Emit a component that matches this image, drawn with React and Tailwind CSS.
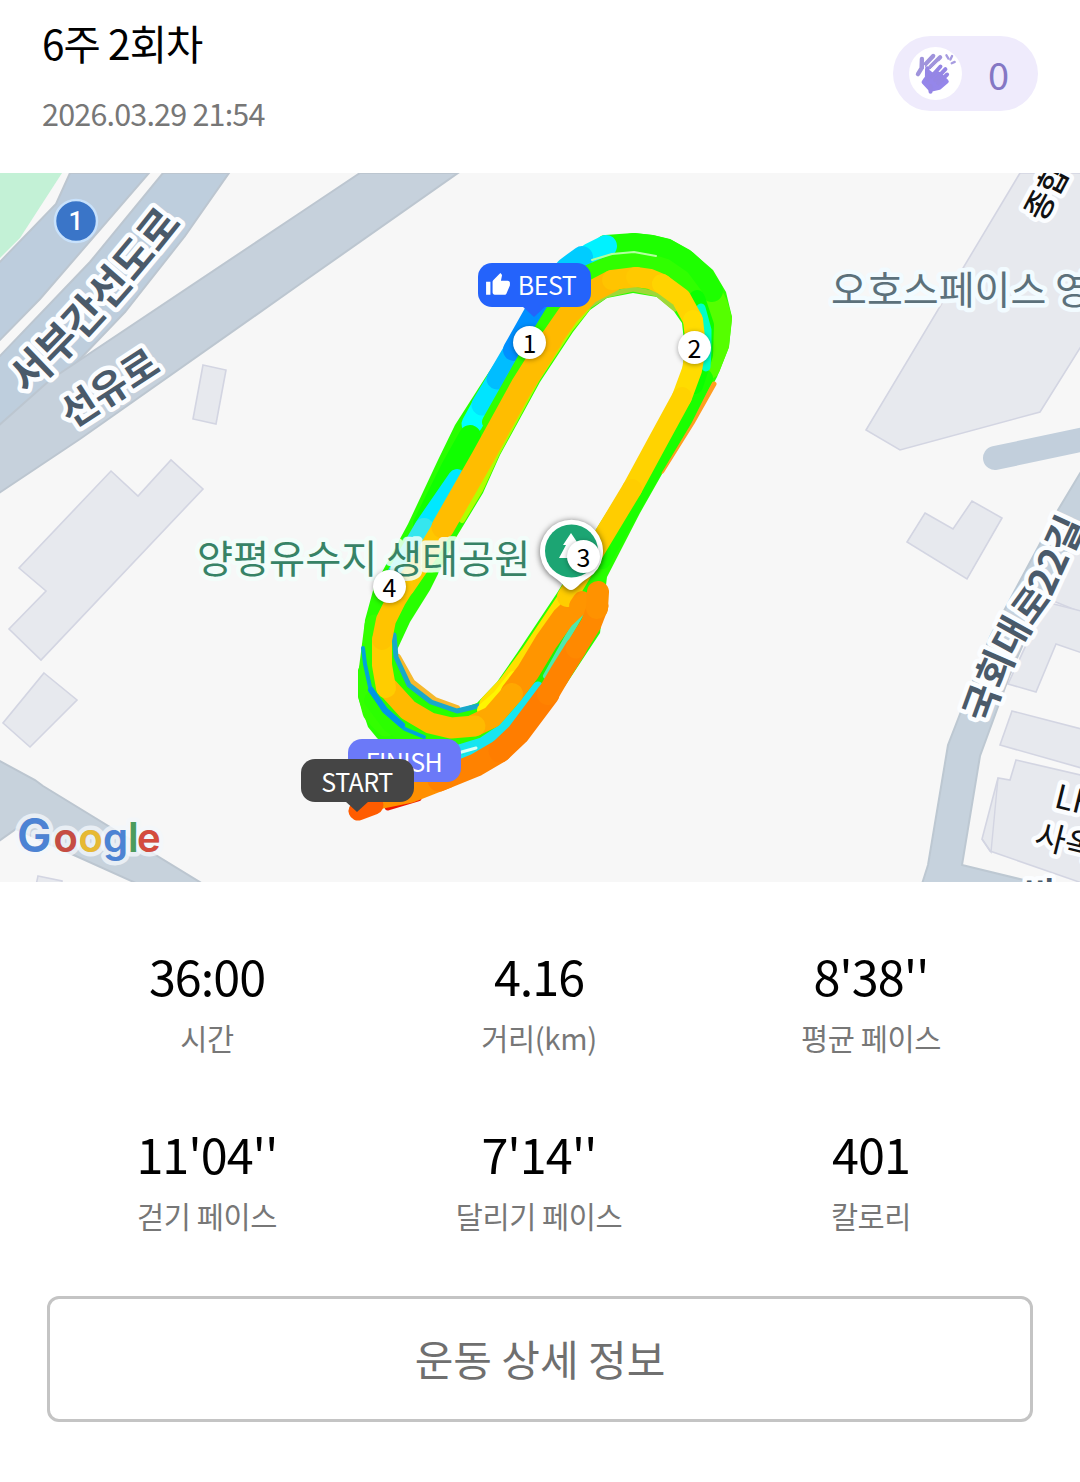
import React from 'react';
import { MdThumbUp } from 'react-icons/md';

const stats = [
  { value: '36:00', label: '시간' },
  { value: '4.16', label: '거리(km)' },
  { value: "8'38''", label: '평균 페이스' },
  { value: "11'04''", label: '걷기 페이스' },
  { value: "7'14''", label: '달리기 페이스' },
  { value: '401', label: '칼로리' },
];

const buildings = [
  '203,365 226,370 216,424 193,419',
  '111,471 138,496 171,460 203,489 41,660 9,629 46,591 19,568',
  '44,673 77,700 30,747 3,723',
  '38,876 62,881 62,890 35,890',
  '1020,173 1085,173 1085,340 1040,412 900,450 866,430',
  '925,513 953,529 972,501 1002,518 967,579 907,542',
  '1070,548 1085,555 1085,614 1046,598',
  '1046,602 1085,612 1085,654 1056,644 1036,692 1008,684',
  '1012,711 1085,730 1085,769 1000,745',
  '1016,760 1085,776 1085,884 990,851 982,839 998,778 1010,780',
];

const googleLetters = [
  { ch: 'G', x: 17, size: 46, fill: '#4c83d4' },
  { ch: 'o', x: 53.5, size: 40, fill: '#c64c43' },
  { ch: 'o', x: 78.5, size: 40, fill: '#e7b933' },
  { ch: 'g', x: 103, size: 40, fill: '#4c83d4' },
  { ch: 'l', x: 128, size: 41, fill: '#4b9c5d' },
  { ch: 'e', x: 137, size: 40, fill: '#d44b3d' },
];

// whole track footprint: outer edge, then the infield hole
const trackShape =
  'M590 247 L612 237 L633 233 L653 235 L670 239 L690 250 L713 270 L726 292 L732 317 L729 347 L717 377 L693 423 L670 460 L640 513 L607 577 L600 633 L567 683 L523 743 L460 775 L400 760 L377 738 L368 727 L358 697 L358 670 L362 660 L365 620 L374 587 L408 524 L438 460 L455 425 L485 378 L520 325 L560 270 Z ' +
  'M590 310 L573 332 L540 382 L500 455 L483 493 L457 536 L430 590 L410 622 L397 650 L398 658 L413 685 L437 703 L457 710 L477 703 L497 682 L517 653 L557 593 L600 523 L640 460 L657 433 L673 400 L682 373 L685 350 L682 323 L673 310 L657 297 L633 293 L607 298 Z';

// pace coloured segments, drawn bottom to top
const segments = [
  // outer lap
  { d: 'M386 726 L373 712 L369 697 L369 672 L375 625', c: '#33ff00', w: 21 },
  { d: 'M472 424 L483 404', c: '#00ffff', w: 21 },
  { d: 'M482 405 L497 380', c: '#00e4ff', w: 21 },
  { d: 'M497 379 L514 350', c: '#00bdff', w: 21 },
  { d: 'M514 350 L540 304 L553 284', c: '#0090ff', w: 22 },
  { d: 'M470 436 L452 468 L424 524', c: '#10ff00', w: 22 },
  { d: 'M457 478 L424 526', c: '#00e8ff', w: 18 },
  { d: 'M424 528 L396 576', c: '#35e6ee', w: 20 },
  { d: 'M710 291 L717 305 L721 319 L718 345 L709 368', c: '#55ff00', w: 22 },
  { d: 'M606 246 L634 244 L651 246 L667 250 L686 261 L703 277 L712 291', c: '#1eff00', w: 22 },
  { d: 'M590 254 L606 246', c: '#00f2ff', w: 22 },
  { d: 'M553 284 L567 268 L582 257', c: '#00ccff', w: 22 },
  { d: 'M714 384 L692 423 L662 471', c: '#ff9d20', w: 5 },
  { d: 'M704 378 L684 418 L654 468 L602 560', c: '#1bff00', w: 18 },
  // second lap
  { d: 'M490 422 L538 337 L568 288 L590 272 L611 263 L634 260 L650 262 L666 267 L682 278 L697 298', c: '#30ff00', w: 16 },
  { d: 'M697 298 L706 325 L705 355 L695 386', c: '#0bff00', w: 16 },
  { d: 'M701 308 L707 330 L707 350 L706 367', c: '#00ffc8', w: 9 },
  { d: 'M592 260 L612 254 L634 252 L656 256', c: '#b4ffa0', w: 2 },
  // inner edge
  { d: 'M462 520 L480 490 L497 453 L537 379 L570 329 L588 307', c: '#b0ff00', w: 6 },
  { d: 'M588 307 L607 295 L633 289 L657 294 L675 309', c: '#9ed838', w: 5 },
  { d: 'M398 657 L412 682 L435 700 L457 708', c: '#f5b92c', w: 6 },
  { d: 'M394 635 L396 657 L409 685 L431 702 L457 711 L478 706', c: '#18a8cb', w: 5 },
  { d: 'M568 598 L530 655 L508 685 L489 705', c: '#ffe000', w: 20 },
  { d: 'M514 678 L499 697 L484 710', c: '#fff500', w: 14 },
  // bottom curve
  { d: 'M373 700 L391 724 L415 740 L456 744 L495 732 L523 700 L544 666', c: '#2cff00', w: 18 },
  { d: 'M583 608 L564 642 L538 684', c: '#20f400', w: 18 },
  { d: 'M363 648 L365 664 L370 687 L384 711 L405 729 L424 737', c: '#00a5d8', w: 4 },
  { d: 'M371 690 L385 710 L402 725', c: '#0096e6', w: 6 },
  { d: 'M583 610 L566 640 L546 676', c: '#4ee8ae', w: 6 },
  { d: 'M538 687 L520 710 L503 729 L482 743 L456 751', c: '#17e5f0', w: 11 },
  { d: 'M455 762 L484 752', c: '#19e5f0', w: 9 },
  { d: 'M458 753 L476 748', c: '#d8fff4', w: 3 },
  // last lap
  { d: 'M578 604 L563 618 L546 642 L528 672 L512 693', c: '#ff9500', w: 23 },
  { d: 'M475 725 L492 717 L512 694', c: '#ffa800', w: 22 },
  { d: 'M475 726 L451 728 L430 723 L408 710 L388 688', c: '#ffba00', w: 21 },
  { d: 'M386 688 L382 665 L382 640', c: '#ffcd00', w: 20 },
  { d: 'M382 640 L386 620 L396 600 L406 584', c: '#ffc400', w: 20 },
  { d: 'M404 587 L426 555 L452 512', c: '#ffc800', w: 21 },
  { d: 'M443 527 L483 457 L522 386 L551 340', c: '#ffbd00', w: 23 },
  { d: 'M550 341 L568 315 L589 293 L612 281', c: '#ffba00', w: 22 },
  { d: 'M612 280 L636 277', c: '#ffc400', w: 20 },
  { d: 'M636 277 L650 279 L662 284', c: '#ffc900', w: 20 },
  { d: 'M662 284 L681 298 L693 320', c: '#ffd400', w: 20 },
  { d: 'M693 320 L696 347 L692 370 L682 397', c: '#ffdc00', w: 20 },
  { d: 'M682 397 L658 441 L632 489', c: '#ffd300', w: 20 },
  { d: 'M632 489 L600 542 L567 597', c: '#ffcd00', w: 20 },
  { d: 'M578 606 L582 600', c: '#ff9500', w: 18 },
  // warm up
  { d: 'M388 807 L418 798', c: '#ee1600', w: 7 },
  { d: 'M380 799 L410 793 L448 778', c: '#ff9000', w: 20 },
  { d: 'M439 780 L476 765 L500 751', c: '#ff8200', w: 23 },
  { d: 'M500 751 L518 734 L548 694', c: '#ff7d00', w: 23 },
  { d: 'M548 694 L561 672 L576 648', c: '#ff8300', w: 22 },
  { d: 'M576 648 L591 624 L598 606', c: '#ff8900', w: 21 },
  { d: 'M597 608 L598 592', c: '#ff9200', w: 22 },
  { d: 'M358 811 L374 805', c: '#ff5c00', w: 19 },
];

const markers = [
  { n: 1, pos: 'left-[513px] top-[153px]' },
  { n: 2, pos: 'left-[678px] top-[158px]' },
  { n: 3, pos: 'left-[567px] top-[367px]' },
  { n: 4, pos: 'left-[373px] top-[397px]' },
];

const ClapIcon = () => (
  <svg viewBox="116 80 160 160" className="h-[53px] w-[53px]" fill="none" strokeLinecap="round" strokeLinejoin="round">
    <g stroke="#a094dc" strokeWidth="13">
      <path d="M155 116 L154 144 L143 162" />
      <path d="M189 107 L158 140" />
      <path d="M210 111 L180 141" />
    </g>
    <path d="M170 150 L169 172 L160 186 L181 209 L208 203 L230 184 L214 168 L205 160 L186 164 Z" fill="#9586ea" stroke="#9586ea" strokeWidth="12" />
    <g stroke="#fff" strokeWidth="3">
      <path d="M163 136 L162 170" />
      <path d="M180 149 L205 125" />
    </g>
    <g stroke="#9586e4" strokeWidth="12">
      <path d="M171 144 L172 178" />
      <path d="M211 139 L184 169" />
      <path d="M226 147 L195 180" />
      <path d="M231 163 L204 189" />
      <path d="M181 198 L181 215" />
    </g>
    <g stroke="#a79ce0" strokeWidth="7">
      <path d="M229 105 L235 115" />
      <path d="M246 107 L241 118" />
      <path d="M254 125 L245 129" />
    </g>
  </svg>
);

const MapCanvas = () => (
  <svg viewBox="0 173 1080 709" className="block h-[709px] w-full" fontFamily="'Noto Sans CJK KR', sans-serif">
    <rect y="173" width="1080" height="709" fill="#f7f7f7" />
    <path d="M0 173 H62 L20 238 L0 258 Z" fill="#c3f1d6" />

    <g fill="#e7e9ee" stroke="#d3d5e2" strokeWidth="1.6">
      {buildings.map((p) => <polygon key={p} points={p} />)}
    </g>
    <path d="M998 778 L991 852 L982 839" fill="none" stroke="#d3d5e2" strokeWidth="1.4" />

    {/* roads */}
    <g stroke="#bcc6d0" strokeWidth="2">
      <path d="M70 173 L56 204 L-4 266 V344 L40 299 L149 173 Z" fill="#bdcddd" />
      <path d="M163 173 L90 262 L-4 360 V440 L60 380 L125 312 L185 236 L229 173 Z" fill="#becedd" />
      <path d="M360 173 L300 213 L50 380 L-4 428 V495 L80 439 L300 284 L458 173 Z" fill="#c6d1dc" />
      <path d="M-4 759 L35 780 L43 786 L203 884 H138 L16 829 L-4 843 Z" fill="#c7d2dc" />
    </g>
    <path d="M995 458 L1085 439" stroke="#c2cfdc" strokeWidth="24" strokeLinecap="round" />
    <path d="M1085 465 L1058 510 L990 637 L948 745 L928 865 L922 884 H1040 L962 865 L980 756 L1010 674 L1060 560 L1085 530 Z" fill="#c6d2dd" stroke="#bdc8d2" strokeWidth="2" />

    <path d={trackShape} fill="#28ff00" fillRule="evenodd" />
    <g fill="none" strokeLinecap="round" strokeLinejoin="round">
      {segments.map((s) => <path key={s.d} d={s.d} stroke={s.c} strokeWidth={s.w} />)}
    </g>

    <defs>
      <path id="road-seobu" d="M27 395 Q112 316 204 195" />
      <path id="road-gukhoe" d="M989 724 Q1014 648 1048 605 L1100 492" />
    </defs>

    {/* labels */}
    <g stroke="#fbfdff" strokeWidth="9" strokeLinejoin="round" paintOrder="stroke">
      <g fill="#4a5a6a" fontWeight="700">
        <text fontSize="42"><textPath href="#road-seobu">서부간선도로</textPath></text>
        <text fontSize="39" transform="translate(72 429) rotate(-33)">선유로</text>
        <text fontSize="38.500"><textPath href="#road-gukhoe">국회대로22길</textPath></text>
        <text fontSize="34" x="1024" y="907">비</text>
      </g>
      <g fill="#111" fontSize="33">
        <text fontSize="31" fontWeight="500" transform="translate(1043 223) rotate(-62)">종합</text>
        <text transform="translate(1053 807) rotate(14)">LH</text>
        <text transform="translate(1033 846) rotate(14)">사옥</text>
      </g>
      <text x="831" y="304" fontSize="39" fill="#5c717b" stroke="#f2fbff">오호스페이스 영</text>
      <text x="197" y="573" fontSize="39.200" fill="#378366" stroke="#f3fffb" strokeOpacity="0.85">양평유수지 생태공원</text>
    </g>

    <g fontFamily="Inter, sans-serif" fontWeight="600" stroke="#f4f8fc" strokeOpacity="0.75" strokeWidth="9" strokeLinejoin="round">
      {googleLetters.map((l) => <text key={l.x} x={l.x} y="851.500" fontSize={l.size}>{l.ch}</text>)}
    </g>
    <g fontFamily="Inter, sans-serif" fontWeight="600" aria-hidden="true">
      {googleLetters.map((l) => <text key={l.x} x={l.x} y="851.500" fontSize={l.size} fill={l.fill}>{l.ch}</text>)}
    </g>

    {/* route shield */}
    <circle cx="76" cy="221" r="21" fill="#3a75c8" stroke="#c8e1fb" strokeWidth="2.5" />
    <text x="76" y="230" fontSize="26" fontFamily="Roboto, sans-serif" fontWeight="500" fill="#fff" textAnchor="middle">1</text>

    {/* park pin */}
    <g className="drop-shadow-[0_1px_3px_rgba(0,0,0,0.6)]">
      <path d="M571 590 C566 590 563 583 555 578 A31.500 31.500 0 1 1 588 578 C579 583 576 590 571 590 Z" fill="#fff" />
      <circle cx="571.500" cy="551" r="26.500" fill="#1ca573" />
      <path d="M571 533 L579 545 H576 L584 558 H559 L566 545 H563 Z" fill="#fff" />
    </g>
  </svg>
);

const Badge = ({ className, tail, children }) => (
  <div className={`absolute flex w-[113px] items-center justify-center rounded-[14px] text-[25px] tracking-[-0.5px] text-white ${className}`}>
    {children}
    {tail && <span className={`absolute top-full left-[44px] -mt-px h-[11px] w-[24px] [clip-path:polygon(0_0,100%_0,50%_100%)] ${tail}`} />}
  </div>
);

export default function App() {
  return (
    <div className="h-[1482px] w-[1080px] overflow-hidden bg-white font-['Noto_Sans_CJK_KR',sans-serif] text-black">
      <header className="flex h-[173px] items-start justify-between pl-[42px] pr-[42px]">
        <div>
          <h1 className="mt-[14px] text-[40.5px] leading-[58px] tracking-[-0.9px]">6주 2회차</h1>
          <p className="mt-[19px] text-[30.5px] leading-[44px] tracking-[-0.8px] text-[#777]">2026.03.29 21:54</p>
        </div>
        <div className="mt-[36px] flex h-[75px] w-[145px] items-center rounded-full bg-[#efebfc] pl-4">
          <div className="h-[53px] w-[53px] rounded-full bg-white">
            <ClapIcon />
          </div>
          <span className="ml-[26px] text-[38px] leading-[54px] text-[#8477c4]">0</span>
        </div>
      </header>

      <section className="relative h-[709px] overflow-hidden">
        <MapCanvas />
        {markers.map((m) => (
          <div key={m.n} className={`absolute flex h-[33px] w-[33px] items-center justify-center rounded-full bg-white pb-px text-[25px] leading-none shadow-[0_1px_5px_rgba(0,0,0,0.35)] ${m.pos}`}>
            {m.n}
          </div>
        ))}
        <Badge className="left-[478px] top-[90px] h-[44px] gap-[7px] bg-[#2463fb] pr-[8px]" tail="bg-[#2463fb]">
          <MdThumbUp size={26} />
          BEST
        </Badge>
        <Badge className="left-[348px] top-[566px] h-[43px] bg-[#6b79f8] pt-[3px] pr-px">FINISH</Badge>
        <Badge className="left-[301px] top-[586px] h-[43px] bg-[#454545] pt-[3px] pr-px" tail="bg-[#454545]">START</Badge>
      </section>

      <section className="grid grid-cols-3 gap-y-[28px] pt-[58px] pr-[43px] pl-[41px]">
        {stats.map((s) => (
          <div key={s.label} className="flex h-[150px] flex-col items-center">
            <span className="text-[48.5px] leading-[70px] tracking-[-1px]">{s.value}</span>
            <span className="mt-[5px] text-[29.5px] leading-[44px] tracking-[-0.4px] text-[#777]">{s.label}</span>
          </div>
        ))}
      </section>

      <button className="mx-[47px] mt-[28px] flex h-[126px] w-[986px] items-center justify-center rounded-[12px] border-[3px] border-[#c4c4c4] pb-[4px] text-[42px] text-[#6f6f6f]">
        운동 상세 정보
      </button>
    </div>
  );
}
